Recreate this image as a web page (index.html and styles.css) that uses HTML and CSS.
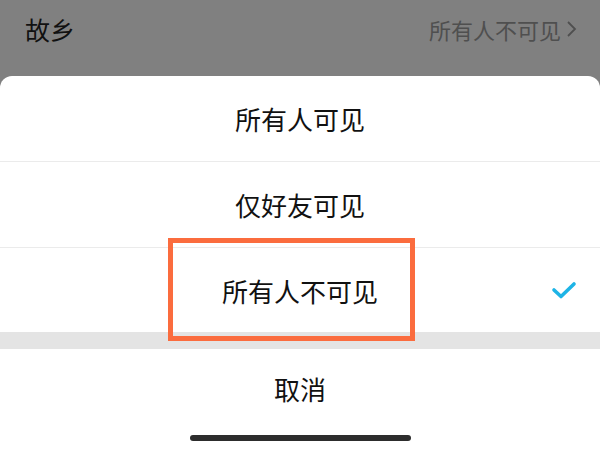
FILE: index.html
```html
<!DOCTYPE html>
<html lang="zh-CN">

<head>
  <meta charset="UTF-8">
  <meta name="viewport" content="width=device-width, initial-scale=1.0">
  <title>故乡</title>
  <link rel="stylesheet" href="styles.css">
</head>

<body>
  <div class="page">
    <div class="setting-row">
      <div class="setting-name">故乡</div>
      <div class="setting-value">
        所有人不可见
        <svg class="arrow" width="12" height="20" viewBox="0 0 12 20">
          <path d="M3 3 L10 10 L3 17" fill="none" stroke="#4f4f4f" stroke-width="1.8" />
        </svg>
      </div>
    </div>

    <div class="sheet">
      <div class="sheet-option">所有人可见</div>
      <div class="sheet-option">仅好友可见</div>
      <div class="sheet-option selected">
        所有人不可见
        <svg class="check" width="26" height="18" viewBox="0 0 26 18">
          <path d="M3 9 L10 15.5 L23 3" fill="none" stroke="#1eb4e6" stroke-width="3.6" stroke-linecap="round" stroke-linejoin="round" />
        </svg>
        <div class="highlight"></div>
      </div>
      <div class="sheet-gap"></div>
      <div class="sheet-cancel">取消</div>
      <div class="home-bar-wrap">
        <div class="home-bar"></div>
      </div>
    </div>
  </div>
</body>

</html>
```

FILE: styles.css
```css
* {
  box-sizing: border-box;
}

body {
  margin: 0;
  background-color: #808080;
  font-family: "Noto Sans CJK SC", "Noto Sans", sans-serif;
  color: #111;
}

.page {
  width: 600px;
  height: 450px;
  display: flex;
  flex-direction: column;
  overflow: hidden;
}

.setting-row {
  display: flex;
  justify-content: space-between;
  align-items: center;
  height: 58px;
  padding: 0 23px 0 25px;
  margin-bottom: 18px;
}

.setting-name {
  font-size: 25px;
}

.setting-value {
  display: flex;
  align-items: center;
  gap: 4px;
  font-size: 22px;
  color: #4f4f4f;
}

.sheet {
  flex: 1;
  display: flex;
  flex-direction: column;
  background-color: #fff;
  border-radius: 12px 12px 0 0;
}

.sheet-option {
  position: relative;
  display: flex;
  justify-content: center;
  align-items: center;
  height: 86px;
  font-size: 26px;
  border-bottom: 1px solid #ebebeb;
}

.sheet-option.selected {
  height: 84px;
  border-bottom: none;
}

.sheet-option .check {
  position: absolute;
  right: 23px;
  top: 33px;
}

/* orange annotation box drawn over the row */
.highlight {
  position: absolute;
  left: 168px;
  top: -10px;
  width: 247px;
  height: 103px;
  border: 5px solid #fb6c3e;
}

.sheet-gap {
  height: 17px;
  background-color: #e4e4e4;
}

.sheet-cancel {
  display: flex;
  justify-content: center;
  align-items: center;
  height: 78px;
  font-size: 26px;
}

.home-bar-wrap {
  display: flex;
  justify-content: center;
  padding-top: 8px;
}

.home-bar {
  width: 221px;
  height: 6px;
  background-color: #2d2d2d;
  border-radius: 3px;
}
```
